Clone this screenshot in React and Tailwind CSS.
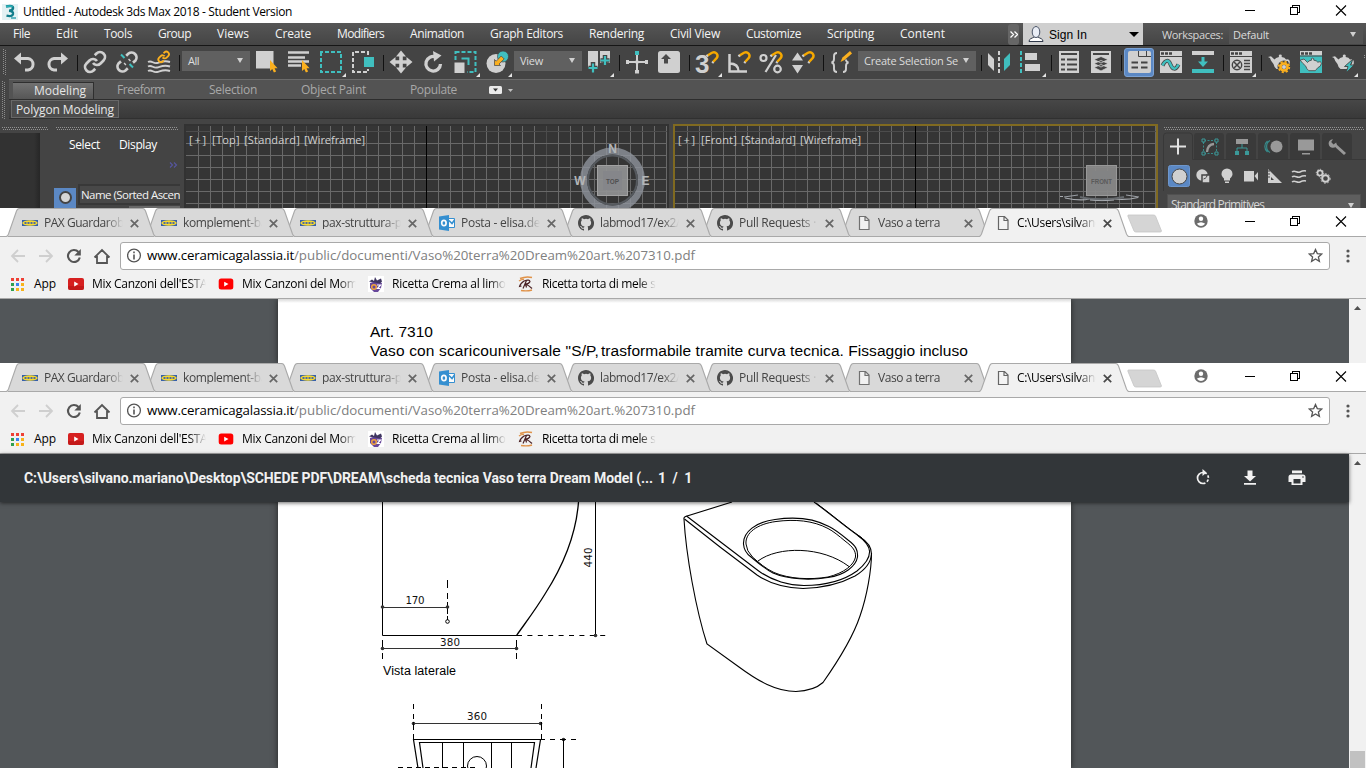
import React, { useLayoutEffect, useRef, useState } from "react";

const L = "#d0d0d0";
const TEAL = "#40bfbf";
const OR = "#fbb01f";
const DK = "#444444";

/* Text set to a given width by adjusting its tracking. */
function Fit({ w, className = "", children }) {
  const ref = useRef(null);
  const [ls, setLs] = useState(0);
  useLayoutEffect(() => {
    const el = ref.current;
    el.style.letterSpacing = "0px";
    const natural = el.getBoundingClientRect().width;
    const value = (w - natural) / el.textContent.length;
    el.style.letterSpacing = value + "px";
    setLs(value);
  }, [w]);
  return (
    <span className={"block shrink-0 whitespace-pre " + className} style={{ width: w }}>
      <span ref={ref} className="inline-block" style={{ letterSpacing: ls }}>
        {children}
      </span>
    </span>
  );
}

function Icon({ x, y = 46, w = 32, h = 33, children, className = "" }) {
  return (
    <svg className={"block shrink-0 " + className} width={w} height={h} viewBox={`${x} ${y} ${w} ${h}`} fill="none">
      {children}
    </svg>
  );
}

const Sep = () => (
  <span className="flex h-[33px] w-1.5 shrink-0 items-center justify-center pt-px pl-0.5">
    <span className="h-4 w-px bg-[#111111]" />
  </span>
);
const Caret = () => <svg className="block shrink-0" width="6" height="5" viewBox="0 0 6 5"><path d="M0 0h6L3 5z" fill={L} /></svg>;
const Corner = ({ x }) => <path d={`M${x} 73v4h-4z`} fill="#e4e4e4" />;
const Cursor = ({ x, y }) => <path d={`M${x} ${y}v11l2.3-2 1.6 3.4 2.2-1-1.5-3.2h3z`} fill={OR} />;
const Magnet = ({ x }) => (
  <g transform={`translate(${x} 0)`}>
    <path d="M-5.5 55.5L-1 52.8a3.6 3.6 0 0 1 4.6 5.4L0 62" stroke="#f5a800" strokeWidth="2.4" />
    <path d="M-6.6 56.2l1.5-1M-.8 63l1.2-1.2" stroke={L} strokeWidth="2.4" />
  </g>
);
const linkA = "M10 13a5 5 0 0 0 7.54.54l3-3a5 5 0 0 0-7.07-7.07l-1.72 1.71";
const linkB = "M14 11a5 5 0 0 0-7.54-.54l-3 3a5 5 0 0 0 7.07 7.07l1.71-1.71";
const Teapot = ({ x, y }) => (
  <g transform={`translate(${x} ${y})`}>
    <path d="M17.500 6.500q4-1.500 3.500 2.500-.5 3-4 4.500" stroke={L} strokeWidth="1.700" />
    <path d="M0 3l3-.8 3.500 3.300Q7.500 3.500 11 3q-.8-2.500 1.300-2.500T13.600 3Q17 3.400 18 5.500 19.500 11 15.500 15H8.500Q6 13 5.500 10 3 7.500 2 4z" fill={L} />
  </g>
);

function Drop({ w, tw, children }) {
  return (
    <span className="mb-1 flex h-5 shrink-0 items-center justify-between bg-[#606060] pr-[7px] pl-1.5" style={{ width: w }}>
      <Fit w={tw} className="text-[11px] text-[#dcdcdc]">{children}</Fit>
      <Caret />
    </span>
  );
}

const WinButtons = () => (
  <svg className="block" width="116" height="23" viewBox="1240 0 116 23" fill="none" stroke="#000000" shapeRendering="crispEdges">
    <path d="M1245 10.500h10" />
    <path d="M1290.500 7.500h7v7h-7zM1292.500 7v-1.500h7v7h-2" />
    <path d="M1336 5.500l10 10M1346 5.500l-10 10" shapeRendering="auto" strokeWidth="1.1" />
  </svg>
);

const MENU = [["File", 17], ["Edit", 22], ["Tools", 28], ["Group", 33], ["Views", 32], ["Create", 36], ["Modifiers", 47], ["Animation", 54], ["Graph Editors", 73], ["Rendering", 55], ["Civil View", 50], ["Customize", 55], ["Scripting", 47], ["Content", 45]];

function MaxHeader() {
  return (
    <>
      <div className="flex h-[23px] items-center justify-between bg-white">
        <div className="flex items-center pl-0.5">
          <svg width="16" height="16" viewBox="0 0 16 16" fill="none">
            <path d="M0 0h16v16H0z" fill="#e3f1f3" />
            <path d="M4 2.500Q11.500 1 11 4.300 10.600 6.800 7 6.800 11.500 7 11 10 10.300 13 4.500 11.700" stroke="#117d8b" strokeWidth="2.400" />
            <path d="M4 2.500Q9 1.500 10.500 3" stroke="#2bb3b8" strokeWidth="1.500" />
            <path d="M9 14h5" stroke="#37a5b1" strokeWidth="1.500" />
          </svg>
          <Fit w={269} className="ml-[5px] text-[12px] text-black">Untitled - Autodesk 3ds Max 2018 - Student Version</Fit>
        </div>
        <div className="pr-[10px]"><WinButtons /></div>
      </div>
      <div className="flex h-[23px] items-center border-b border-[#161616] bg-linear-to-b from-[#565656] to-[#454545]">
        <div className="flex w-[1008px] shrink-0 items-center gap-[26px] pl-[13px]">
          {MENU.map(([t, w]) => <Fit key={t} w={w} className="text-[12px] text-[#f4f4f4]">{t}</Fit>)}
        </div>
        <span className="flex h-[21px] w-[11px] items-center justify-center rounded-[3px] bg-[#666666]">
          <svg width="8" height="7" viewBox="0 0 8 7" fill="none" stroke="#ffffff" strokeWidth="1.300"><path d="M.5.5l3 3-3 3M4.500.5l3 3-3 3" /></svg>
        </span>
        <span className="ml-1 flex h-[22px] w-[120px] items-center bg-[#cfcfcf] pl-[5px]">
          <svg width="16" height="18" viewBox="0 0 16 18" fill="none">
            <path d="M1 16.500c0-3 3-3 5-4.500h4c2 1.500 5 1.500 5 4.500z" fill="#ffffff" stroke="#30394a" />
            <ellipse cx="8" cy="7" rx="3.800" ry="5.500" fill="#e9edf5" stroke="#4b5568" />
          </svg>
          <Fit w={38} className="ml-[5px] pt-px font-['Liberation_Sans',sans-serif] text-[12px] text-black">Sign In</Fit>
          <svg className="ml-[42px]" width="10" height="5" viewBox="0 0 10 5"><path d="M0 0h10L5 5z" fill="#000000" /></svg>
        </span>
        <Fit w={61} className="ml-[19px] pt-px text-[11px] text-[#d6d6d6]">Workspaces:</Fit>
        <span className="ml-[6px] flex h-5 w-[134px] items-center justify-between bg-[#545454] pr-[7px] pl-1">
          <Fit w={36} className="pt-px text-[11px] text-[#dcdcdc]">Default</Fit>
          <Caret />
        </span>
      </div>
    </>
  );
}

function Toolbar() {
  return (
    <div className="flex h-[33px] items-center bg-[#444444]">
      <svg className="shrink-0" width="9" height="33" viewBox="0 46 9 33"><path d="M3.500 49v26M5.500 50v26" stroke="#8c8c8c" strokeDasharray="1 1" /></svg>
      <Icon x={9}><path d="M19 58.500h9a5.800 5.800 0 0 1 0 11.500h-3" stroke={L} strokeWidth="3" /><path d="M14 58.500l7-6v12z" fill={L} /></Icon>
      <Icon x={41}><path d="M63 58.500h-9a5.800 5.800 0 0 0 0 11.500h3" stroke={L} strokeWidth="3" /><path d="M68 58.500l-7-6v12z" fill={L} /></Icon>
      <Sep />
      <Icon x={79}><g transform="translate(83 50)" stroke={L} strokeWidth="2.700"><path d={linkA} /><path d={linkB} /></g></Icon>
      <Icon x={111}>
        <g transform="translate(115 50)" stroke={L} strokeWidth="2.700"><path d="M18 12.600l2.500-2.100a5 5 0 0 0-7-7l-2.300 2.200M15 9.500l-1 1M6 11.400l-2.500 2.100a5 5 0 0 0 7 7l2.300-2.200M9.500 14.500l1-1" /></g>
        <path d="M121 54.500l3.500 3.500M129.500 64l3.500 3.500" stroke={TEAL} strokeWidth="2" />
      </Icon>
      <Icon x={143}>
        <path d="M148 62c4-2 5 2 9 1s7-3 13-1M148 66.500c4-2 5 2 9 1s7-3 13-1M148 71c4-2 5 2 9 1s7-3 13-1" stroke={L} strokeWidth="1.900" />
        <g transform="translate(157.300 50.500) scale(.53)" stroke={OR} strokeWidth="3.400"><path d={linkA} /><path d={linkB} /></g>
      </Icon>
      <Sep /><span className="w-px" />
      <Drop w={68} tw={11}>All</Drop>
      <Icon x={250}><path d="M256 51h17.500v17.500H256z" fill={L} /><Cursor x={270} y={60} /></Icon>
      <Icon x={282}><path d="M288 52.500h21M288 57.500h17M288 61.500h21M288 65.500h13" stroke={L} strokeWidth="2.700" /><Cursor x={302} y={60} /></Icon>
      <span className="w-px" />
      <Icon x={315}><rect x="321" y="52" width="20" height="20" stroke={TEAL} strokeWidth="2" strokeDasharray="4 2" strokeDashoffset="2" /><Corner x={346} /></Icon>
      <Icon x={347}><path d="M368 55v-3h-15v20h15v-3" stroke={L} strokeWidth="2" strokeDasharray="4 2" /><path d="M364 57h10v10h-10z" fill={TEAL} /></Icon>
      <Sep />
      <Icon x={385}><path d="M401 54v16M393 62h16" stroke={L} strokeWidth="3.600" /><path d="M401 50.500l5 6h-10zM401 73.500l5-6h-10zM389.500 62l6-5v10zM412.500 62l-6-5v10z" fill={L} /></Icon>
      <Icon x={417}><path d="M436 57a7.300 7.300 0 1 0 4.500 7" stroke={L} strokeWidth="3.300" /><path d="M433 51l8.500 4.500-7.500 6z" fill={L} /></Icon>
      <Icon x={449}><rect x="455.500" y="52" width="20" height="20" stroke={TEAL} strokeWidth="2" strokeDasharray="4 2" /><path d="M454 60h13v13h-13z" fill={DK} /><path d="M461.500 58.500h7v6.500" stroke={TEAL} strokeWidth="2" /><path d="M454.500 62.500h10v10.500h-10z" fill={L} /><Corner x={480} /></Icon>
      <Icon x={481}><circle cx="496" cy="63.500" r="9.500" fill={L} /><circle cx="503" cy="56.500" r="5.500" fill={TEAL} stroke={DK} strokeWidth=".7" /><path d="M494.500 65.500v-6l1.700 1.700 5-5.200 3 3-5.200 5 1.500 1.500z" fill={OR} stroke={DK} strokeWidth=".7" /><Corner x={512} /></Icon>
      <span className="w-px" />
      <Drop w={68} tw={23}>View</Drop>
      <span className="w-px" />
      <Icon x={583}><path d="M588 51h10v16h-10zM600 51h10v12h-10z" fill={L} /><path d="M593 62v9M588.500 68h9M605 55v11M600.500 60.500h9" stroke={DK} strokeWidth="4.500" /><path d="M593 63.500v9M588.500 68h9M605 56v9M600.500 60.500h9" stroke={TEAL} strokeWidth="2.200" /><Corner x={614} /></Icon>
      <Sep />
      <Icon x={621}><path d="M637 55v18M626 62h22" stroke={L} strokeWidth="2" /><path d="M626 60h3v4h-3zM645 60h3v4h-3zM635 70h4v3.500h-4z" fill={L} /><path d="M635.500 60.500h3v3h-3z" fill={L} /><path d="M635 51h4v4h-4z" fill={TEAL} /></Icon>
      <Icon x={653}><rect x="658" y="51" width="22" height="22" rx="2.500" fill={L} /><path d="M666 54l5 5h-3v4.500h-4V59h-3z" fill="#4a4a4a" /></Icon>
      <Sep />
      <Icon x={691}><text x="695" y="72.500" fontFamily="Liberation Sans, sans-serif" fontWeight="700" fontSize="26" fill={L}>3</text><path d="M706 56l7-5 6 5-1 7h-5z" fill={DK} /><Magnet x={713} /><Corner x={722} /></Icon>
      <Icon x={723}><path d="M729.500 54v17.500H747M729.500 63.500q9 0 9 8" stroke={L} strokeWidth="2.500" /><Magnet x={745} /></Icon>
      <Icon x={755}><circle cx="763.500" cy="58" r="3" stroke={L} strokeWidth="2.200" /><circle cx="777.500" cy="69" r="3.300" stroke={L} strokeWidth="2.200" /><path d="M776 55l-10.500 17" stroke={L} strokeWidth="2.200" /><Magnet x={777} /></Icon>
      <Icon x={787}><path d="M797.500 52.500l5.500 8h-11zM797.500 73.500l5.500-8.500h-11z" fill={L} /><Magnet x={809} /></Icon>
      <Sep />
      <Icon x={825}><path d="M837 53q-3 0-3 3v3q0 3-2.500 3.500 2.500.5 2.500 3.500v3q0 3 3 3" stroke={L} strokeWidth="1.900" /><path d="M843 72q3 0 3-3v-3q0-3 2.500-3.500-2.500-.5-2.500-3" stroke={L} strokeWidth="1.900" /><path d="M840.500 62l2-4.500 7.500-6.500 2 2.500-7.500 6.500z" fill={OR} /></Icon>
      <span className="w-px" />
      <Drop w={118} tw={94}>Create Selection Se</Drop>
      <span className="w-px" />
      <Sep />
      <Icon x={983}><path d="M988 53l6 6v12l-6-6z" fill={L} /><path d="M999 51v22" stroke={L} strokeWidth="2" strokeDasharray="4 2" /><path d="M1010 53l-6 6v12l6-6z" fill={TEAL} /></Icon>
      <Icon x={1015}><path d="M1021 51v22" stroke={TEAL} strokeWidth="2" strokeDasharray="4 2" /><path d="M1025 53h12v7h-12zM1025 64h15v7h-15z" fill={L} /><Corner x={1046} /></Icon>
      <Sep />
      <Icon x={1053}><path d="M1059 51h20v22h-20z" fill={L} /><path d="M1061 54h16" stroke={DK} strokeWidth="2" /><path d="M1061 59.500h4M1061 64.500h4M1061 69.500h4M1067 59.500h10M1067 64.500h10M1067 69.500h10" stroke={DK} strokeWidth="2.200" /></Icon>
      <Icon x={1085}><path d="M1091 51h20v22h-20z" fill={L} /><path d="M1093 54h16" stroke={DK} strokeWidth="2" /><path d="M1094 67.500l7 3.500 7-3.500-7-3zM1094 63.500l7 3.500 7-3.500-7-3zM1094 59.500l7 3.500 7-3.500-7-3z" fill={DK} stroke={L} strokeWidth=".8" /></Icon>
      <Sep />
      <Icon x={1123}><rect x="1124.500" y="48.500" width="29" height="28" rx="2.500" fill="#5b88c4" stroke="#7ba2d4" /><rect x="1128" y="51" width="23" height="22" rx="2" fill={L} /><path d="M1138.500 51v5.500h12.500M1146.500 51v5.500" stroke={DK} /><path d="M1131.500 62.500h6.500M1141 62.500h6.500M1131.500 67.500h6.500M1141 67.500h6.500" stroke={DK} strokeWidth="2.200" /></Icon>
      <Icon x={1155}><path d="M1160 51h22v22h-22z" fill={L} /><path d="M1161 53.500h12" stroke={DK} strokeWidth="2.500" strokeDasharray="3 1" /><path d="M1160 56.500h22" stroke={DK} /><path d="M1162.500 65.500c3-6 6-6 8-1s5 6 8 0" stroke={DK} strokeWidth="4" /><path d="M1162.500 65.500c3-6 6-6 8-1s5 6 8 0" stroke={TEAL} strokeWidth="2.500" /></Icon>
      <Icon x={1187}><path d="M1192 51h22v4h-22z" fill={L} /><path d="M1192 69h22v4h-22zM1201.500 57h3v4.500h3.500l-5 5.500-5-5.500h3.500z" fill={TEAL} /></Icon>
      <Sep />
      <Icon x={1225}><path d="M1230 51h22v22h-22z" fill={L} /><path d="M1231 53.500h12" stroke={DK} strokeWidth="2.500" strokeDasharray="3 1" /><path d="M1230 56.500h22" stroke={DK} /><circle cx="1237" cy="65" r="4.700" stroke={DK} strokeWidth="1.400" /><path d="M1234 62l6 6M1240 62l-6 6" stroke={DK} strokeWidth="1.500" /><path d="M1244 60.500h6M1244 63.500h6M1244 66.500h6M1244 69.500h6" stroke={DK} strokeWidth="1.500" /><Corner x={1256} /></Icon>
      <Sep />
      <Icon x={1263}><Teapot x={1268} y={54} /><circle cx="1284" cy="67" r="6.500" fill={DK} /><circle cx="1284" cy="67" r="5.300" stroke={OR} strokeWidth="1.800" strokeDasharray="2.200 1.950" /><circle cx="1284" cy="67" r="3.500" stroke={OR} strokeWidth="2.600" /><circle cx="1284" cy="67" r="2" fill={L} /></Icon>
      <Icon x={1295}><path d="M1300 51h22v22h-22z" fill={TEAL} /><path d="M1300 51h22v4.500h-22z" fill={L} /><path d="M1301 53.500h12" stroke={DK} strokeWidth="2.500" strokeDasharray="3 1" /><path d="M1300 56h22" stroke={DK} /><g stroke={DK} strokeWidth=".8"><path d="M1300.500 60l3.500-1 3.500 3.500q1-2 4-2.300-.8-2 1-2t1.300 2q3 .3 4 2 3.500-1.300 3.500 1.500-.5 3-3.500 4l-2.500 3h-6.500q-2.500-2-3-4.500-3-2.500-5.800-6.200z" fill={L} /></g></Icon>
      <Icon x={1327}><Teapot x={1332} y={54} /><path d="M1353 59l-8.500 7.500h3.500l-2 6.500 8-8h-3.500z" fill={TEAL} stroke={DK} strokeWidth=".9" /><Corner x={1358} /></Icon>
      <svg className="shrink-0" width="7" height="33" viewBox="0 0 7 33"><path d="M5.500 9v4" stroke="#9a9a9a" strokeDasharray="1 1" /></svg>
    </div>
  );
}

function Ribbon() {
  return (
    <div className="flex h-[45px] bg-[#444444]">
      <svg className="shrink-0" width="9" height="40" viewBox="0 79 9 40"><path d="M2.500 81v37M4.500 82v37" stroke="#8c8c8c" strokeDasharray="1 1" /></svg>
      <div className="h-10 w-[1357px]">
        <div className="flex h-[21px] items-end border-t border-b border-t-[#6b6b6b] border-b-[#2d2d2d] bg-[#535353] text-[12px] text-[#a8a8a8]">
          <span className="ml-1 flex h-[17px] w-[81px] items-center justify-end border-t border-r border-[#2f2f2f] bg-linear-to-b from-[#727272] to-[#565656] pr-[7px]">
            <Fit w={52} className="text-[#e6e6e6]">Modeling</Fit>
          </span>
          <div className="flex h-[18px] items-center pl-[23px]">
            <Fit w={48}>Freeform</Fit>
            <Fit w={48} className="ml-11">Selection</Fit>
            <Fit w={65} className="ml-11">Object Paint</Fit>
            <Fit w={47} className="ml-11">Populate</Fit>
            <svg className="ml-8" width="25" height="9" viewBox="0 0 25 9"><rect width="13" height="8" rx="1.500" fill="#e9e9e9" /><path d="M4 2.500h5L6.500 5.500z" fill="#333333" /><path d="M19 3h5l-2.500 3z" fill="#c0c0c0" /></svg>
          </div>
        </div>
        <div className="flex h-[19px] items-center border-b border-[#303030] bg-linear-to-b from-[#474747] to-[#393939] pl-0.5">
          <span className="flex h-[18px] w-[108px] items-center border border-[#686868] bg-[#4c4c4c] pl-1"><Fit w={98} className="pt-px text-[12px] text-[#e6e6e6]">Polygon Modeling</Fit></span>
        </div>
      </div>
    </div>
  );
}

function Viewport({ x, w, black, label, active, children }) {
  const vs = [];
  for (let v = black - 19 * 12; v < x + w - 2; v += 12) vs.push(v);
  return (
    <div className="relative h-[84px] shrink-0 overflow-hidden bg-[#353535]" style={{ width: w }}>
      <svg className="block" width={w} height="84" viewBox={`${x} 124 ${w} 84`} fill="none" shapeRendering="crispEdges">
        {vs.map((v) => <path key={v} d={`M${v + 0.5} 126v82`} stroke={Math.abs(v - black) === 120 ? "#4c4c4c" : "#696969"} />)}
        {[131, 143, 155, 167, 179, 191, 203].map((y) => <path key={y} d={`M${x + 2} ${y + 0.5}h${w - 4}`} stroke={y === 131 ? "#4c4c4c" : "#696969"} />)}
        <path d={`M${black + 0.5} 126v82`} stroke="#000000" />
        {active ? <path d={`M${x + 1} 208v-83h${w - 2}v83`} stroke="#806a20" strokeWidth="2" /> : <path d={`M${x + 1} 208v-83h${w - 2}v83`} stroke="#323232" strokeWidth="2" />}
        <g shapeRendering="auto">{children}</g>
      </svg>
      <span className="absolute top-[8px] left-[5px] flex gap-[4px] text-[11px] leading-4 text-[#d0d0d0]">
        {label.map(([t, lw]) => <Fit key={t} w={lw}>{t}</Fit>)}
      </span>
    </div>
  );
}

function MaxBody() {
  return (
    <div className="flex h-[84px] bg-[#444444]">
      <div className="h-full w-12 pt-[3px]">
        <div className="h-1.5 pl-0.5"><svg width="46" height="4"><path d="M0 .5h45M1 2.500h45" stroke="#929292" strokeDasharray="1 1" /></svg></div>
        <div className="h-[75px] w-10 bg-linear-to-r from-[#323232] from-85% to-[#272727]" />
      </div>
      <div className="h-full w-[136px] overflow-hidden pt-[3px] pl-1.5">
        <svg className="ml-0.5" width="122" height="4"><path d="M0 .5h121M1 2.500h122" stroke="#929292" strokeDasharray="1 1" /></svg>
        <div className="flex h-[28px] items-center gap-[19px] pl-[15px] text-[12px] text-white"><Fit w={31}>Select</Fit><Fit w={38}>Display</Fit></div>
        <div className="flex h-[9px] w-[124px] items-end justify-end"><svg width="9" height="6" fill="none" stroke="#55559e" strokeWidth="1.200"><path d="M1 .5L3.500 3 1 5.500M5 .5L7.500 3 5 5.500" /></svg></div>
        <div className="flex h-[40px] pt-4">
          <span className="mt-1 flex h-[22px] w-[22px] items-start justify-center bg-[#5b88c4] pt-[3px]"><span className="size-[13px] rounded-full border-2 border-[#454545] bg-[#d6d6d6]" /></span>
          <span className="ml-0.5 h-[36px] w-[102px] overflow-hidden">
            <span className="flex h-[21px] items-center overflow-hidden border-2 border-r-0 border-[#383838] bg-[#484848] pl-px"><Fit w={99} className="text-[11.500px] text-[#f2f2f2]">Name (Sorted Ascen</Fit></span>
            <span className="mt-[1px] ml-[51px] block h-2 w-[51px] bg-[#686868]" />
          </span>
        </div>
      </div>
      <Viewport x={184} w={485} black={426} label={[["[+]", 19], ["[Top]", 28], ["[Standard]", 56], ["[Wireframe]", 61]]}>
        <circle cx="612.500" cy="180" r="29" stroke="#8f949c" strokeOpacity=".8" strokeWidth="7" />
        <circle cx="612.500" cy="180" r="24.500" stroke="#55595e" strokeWidth="2" />
        <path d="M597 165h31v31h-31z" fill="#909192" fillOpacity=".92" /><path d="M603 171h19v19h-19z" fill="#85868a" />
        <path d="M597.500 165.500h30v30h-30z" stroke="#a2a2a2" />
        <g fontFamily="Liberation Sans, sans-serif" fontWeight="700" textAnchor="middle"><text x="612.500" y="183.500" fontSize="8" textLength="13" lengthAdjust="spacingAndGlyphs" fill="#505050">TOP</text><g fontSize="12" fill="#b4b6b8"><text x="612.500" y="152.500">N</text><text x="580" y="185">W</text><text x="645.500" y="185">E</text></g></g>
      </Viewport>
      <div className="w-1" />
      <Viewport x={673} w={485} black={915} label={[["[+]", 19], ["[Front]", 36], ["[Standard]", 55], ["[Wireframe]", 61]]} active>
        <path d="M1086 165h31v31h-31z" fill="#8a8a8a" fillOpacity=".92" /><path d="M1092 171h19v19h-19z" fill="#828384" /><path d="M1086.500 165.500h30v30h-30z" stroke="#989898" />
        <text x="1101.500" y="184" fontSize="8" fontWeight="700" textAnchor="middle" fill="#5a5a5a" fontFamily="Liberation Sans, sans-serif" textLength="21" lengthAdjust="spacingAndGlyphs">FRONT</text>
        <path d="M1064 197l14-2M1126 195l13 2" stroke="#9a9ea4" strokeWidth="1.200" />
        <path d="M1060 196.500h3M1065 198c10 2 20 2 24 1M1114 199c10 1 18 0 24-1.500" stroke="#a7abb0" strokeWidth="1.200" />
        <path d="M1080 197c12 3 30 3 44 0" stroke="#666a6e" strokeWidth="2" /><path d="M1090 200c8 .8 16 .8 24 0" stroke="#a7abb0" />
      </Viewport>
      <div className="h-full w-[208px] overflow-hidden pt-[3px] pl-[5px]">
        <svg className="ml-px" width="200" height="4"><path d="M0 .5h199M1 2.500h199" stroke="#929292" strokeDasharray="1 1" /></svg>
        <svg className="block" width="203" height="60" viewBox="1163 131 203 60" fill="none">
          <path d="M1194 160v-24q0-3 3-3h24q3 0 3 3v24zM1226 160v-24q0-3 3-3h24q3 0 3 3v24zM1258 160v-24q0-3 3-3h24q3 0 3 3v24zM1290 160v-24q0-3 3-3h24q3 0 3 3v24zM1322 160v-24q0-3 3-3h24q3 0 3 3v24z" fill="#3a3a3a" />
          <path d="M1163.500 191v-55q0-3 3-3h23q3 0 3 3v23.500H1366" stroke="#383838" />
          <path d="M1170 146.500h16M1178 138.500v16" stroke="#e2e2e2" strokeWidth="2" />
          <path d="M1204 140.500h12M1204 153.500h12M1203.500 142v10M1216.500 142v10" stroke="#378b8b" strokeDasharray="2 1.500" /><path d="M1202 139h3v3h-3zM1215 139h3v3h-3zM1202 152h3v3h-3zM1215 152h3v3h-3z" fill="#3a3a3a" stroke="#3b9999" /><path d="M1207 152q.5-7.500 7-8" stroke="#9a9a9a" strokeWidth="2.300" />
          <path d="M1236 139h12v5h-12z" fill="#999999" /><path d="M1242 144v4M1237 152v-4h10v4" stroke="#3b9999" /><path d="M1235 151h4v4h-4zM1245 151h4v4h-4z" fill="#3b9999" />
          <circle cx="1276.500" cy="146.500" r="6" fill="#999999" /><path d="M1270 140.500a7 7 0 0 0 0 12M1267.500 141a7 7 0 0 0 0 11" stroke="#378b8b" strokeWidth="1.200" />
          <path d="M1298 139.500h16v11h-16zM1302 153h8v1.500h-8z" fill="#999999" />
          <path d="M1335 145l10 9" stroke="#999999" strokeWidth="3" /><path d="M1333 139.200a4.300 4.300 0 1 0 3 7.300 4 4 0 0 0 .2-4l-2.700 2-2.300-2.400z" fill="#999999" />
          <rect x="1168.500" y="165.500" width="21" height="21" rx="2" fill="#5b88c4" stroke="#6e97cc" /><circle cx="1179.500" cy="176.500" r="7.500" fill={L} stroke="#454545" />
          <circle cx="1202" cy="175" r="5.700" fill={L} /><path d="M1202 175h8v8h-8z" fill={L} stroke={DK} strokeWidth="1.500" /><path d="M1203.500 179q4-1 3.500-5" stroke={DK} />
          <path d="M1224 180.500v-2c-2-2-2.500-3-2.500-4.500a5 5 0 0 1 11 0c0 1.500-.5 2.500-2.500 4.500v2zM1225 181.500h4v1.500h-4z" fill={L} />
          <path d="M1244 171h10v10.500h-10zM1254.500 176l3.500-4v8.500z" fill={L} />
          <path d="M1268 169v14h14z" fill={L} /><path d="M1271 177v3h3z" fill={DK} /><path d="M1268 171h2M1268 174h2M1268 177h2" stroke={DK} />
          <path d="M1292 172c3-2.500 5 1.500 8 0s4-1.500 6-1M1292 177c3-2.500 5 1.500 8 0s4-1.500 6-1M1292 182c3-2.500 5 1.500 8 0s4-1.500 6-1" stroke={L} strokeWidth="1.400" />
          <circle cx="1320" cy="173" r="2.500" stroke={L} strokeWidth="1.600" /><circle cx="1320" cy="173" r="3.700" stroke={L} strokeDasharray="1.400 1.400" /><circle cx="1325.500" cy="178.500" r="3.300" stroke={L} strokeWidth="2" /><circle cx="1325.500" cy="178.500" r="4.700" stroke={L} strokeDasharray="1.800 1.700" />
        </svg>
        <div className="mt-[3px] ml-1 flex h-5 w-[194px] items-center justify-between border border-[#505050] bg-[#5e5e5e] pt-0.5 pr-[6px] pl-[3px]"><Fit w={93} className="text-[12px] text-[#d6d6d6]">Standard Primitives</Fit><Caret /></div>
      </div>
    </div>
  );
}

function Ikea() {
  return <svg width="16" height="16" viewBox="0 0 16 16"><path d="M0 5h16v6H0z" fill="#2454a8" /><ellipse cx="8" cy="8" rx="7.700" ry="2.800" fill="#fcd91c" /><path d="M2.500 7h2v2h-2zM5.500 7h2v2h-2zM8.500 7h2v2h-2zM11.500 7h2v2h-2z" fill="#3e609b" /></svg>;
}
function Outlook() {
  return <svg width="16" height="16" viewBox="0 0 16 16" fill="none"><path d="M9.500 3.500h6v9h-6z" fill="#fff" stroke="#2488d0" /><path d="M10 5.500l3 3L15.500 5" stroke="#2488d0" strokeWidth="1.600" /><path d="M0 1.500L10 0v16L0 14.500z" fill="#2488d0" /><ellipse cx="4.900" cy="8" rx="2.200" ry="2.700" stroke="#fff" strokeWidth="1.700" /></svg>;
}
function GitHub() {
  return <svg width="16" height="16" viewBox="0 0 16 16"><path fill="#3c3c3c" d="M8 0C3.580 0 0 3.580 0 8c0 3.540 2.290 6.530 5.470 7.590.4.07.55-.17.55-.38v-1.490c-2.010.37-2.530-.49-2.690-.94-.09-.23-.48-.94-.82-1.130-.28-.15-.68-.52-.01-.53.63-.01 1.080.58 1.230.82.72 1.210 1.870.87 2.330.66.07-.52.28-.87.51-1.070-1.780-.2-3.640-.89-3.640-3.950 0-.87.31-1.590.82-2.150-.08-.2-.36-1.020.08-2.120 0 0 .67-.21 2.200.82a7.600 7.600 0 0 1 4 0c1.530-1.040 2.200-.82 2.200-.82.44 1.100.16 1.920.08 2.120.51.56.82 1.270.82 2.150 0 3.070-1.870 3.750-3.650 3.950.29.25.54.73.54 1.480v2.200c0 .21.15.46.55.38A8 8 0 0 0 8 0z" /></svg>;
}
function Page() {
  return <svg width="16" height="16" viewBox="0 0 16 16" fill="none" stroke="#666" strokeWidth="1.200"><path d="M3.500 1.500h6l3.500 3.500v9.500H3.500zM9 1.500V5.500h4" fill="#f4f4f4" /></svg>;
}

const TABS = [
  [Ikea, "PAX Guardaroba", 86], [Ikea, "komplement-ba", 84], [Ikea, "pax-struttura-pe", 86], [Outlook, "Posta - elisa.del", 82],
  [GitHub, "labmod17/ex2/", 80], [GitHub, "Pull Requests ·", 77], [Page, "Vaso a terra", 62], [Page, "C:\\Users\\silvano", 85],
];
const Z = ["z-8", "z-7", "z-6", "z-5", "z-4", "z-3", "z-2", "z-10"];

const Bookmark = ({ icon, text, tw, w }) => (
  <span className="flex shrink-0 items-center" style={{ width: w }}>
    {icon}
    <span className="ml-2 w-[114px] overflow-hidden mask-r-from-85% mask-r-to-100%"><Fit w={tw} className="text-[12px] text-black">{text}</Fit></span>
  </span>
);

function Chrome() {
  return (
    <div className="relative z-10 h-[91px] w-full shrink-0 border-b border-[#a8a8a8] bg-[#f1f1f1]">
      <div className="flex h-[29px] border-b border-[#a9a9a9] bg-white pl-1.5">
        {TABS.map(([Fav, title, tw], i) => {
          const on = i === 7;
          return (
            <div key={i} className={"relative flex h-[29px] w-[139px] shrink-0 items-center pt-px pl-4 " + Z[i]}>
              <svg className="absolute top-0 left-0" width="152" height="29" viewBox="0 0 152 29">
                <path d="M0 29C1.500 28.500 2 27 2.500 26L10.500 3Q11.500.5 13.500.5H136.500Q138.500.5 139.500 3L147.500 26C148 27 148.500 28.500 150 29z" fill={on ? "#f1f1f1" : "#d9d9d9"} />
                <path d="M0 28.500C1.500 28.500 2 27 2.500 26L10.500 3Q11.500.5 13.500.5H136.500Q138.500.5 139.500 3L147.500 26C148 27 148.500 28.500 150 28.500" fill="none" stroke="#a9a9a9" strokeWidth="1.100" />
                {!on && <path d="M2 28.500h146" stroke="#a9a9a9" />}
              </svg>
              <span className={"relative flex size-4 shrink-0 " + (on ? "" : "opacity-90")}><Fav /></span>
              <span className="relative ml-1.5 w-[79px] shrink-0 overflow-hidden mask-r-from-78% mask-r-to-100%"><Fit w={tw} className={"text-[12px] " + (on ? "text-black" : "text-[#444444]")}>{title}</Fit></span>
              <svg className="relative ml-[7px] shrink-0" width="9" height="9" viewBox="0 0 9 9"><path d="M.8.8l7.400 7.400M8.200.8L.8 8.200" stroke={on ? "#484848" : "#666666"} strokeWidth="1.700" /></svg>
            </div>
          );
        })}
        <svg className="ml-[9px] shrink-0" width="36" height="28" viewBox="0 0 36 28"><path d="M1.500 7H26.500Q28 7 28.500 8L34.500 23Q34.500 24 33 24H9Q7.500 24 7 23L.8 8Q.8 7 1.500 7z" fill="#d5d5d5" stroke="#c5c5c5" strokeWidth=".8" /></svg>
        <svg className="ml-[31px] shrink-0" width="14" height="28" viewBox="0 0 14 28"><circle cx="7" cy="13" r="6.700" fill="#6c6c6c" /><circle cx="7" cy="10.700" r="2.200" fill="#fff" /><path d="M2.800 15.700q4.200-3 8.400 0-4.200 4.600-8.400 0z" fill="#fff" /></svg>
        <span className="mt-[3px] ml-8 shrink-0"><WinButtons /></span>
      </div>
      <div className="flex h-[36px] items-center pt-px">
        <svg className="shrink-0" width="120" height="34" viewBox="0 238 120 34" fill="none">
          <path d="M25 255H12.500M18 249l-6 6 6 6M39 255h12.500M46 249l6 6-6 6" stroke="#cfcfcf" strokeWidth="1.800" />
          <path d="M78.500 251a6 6 0 1 0 1.300 5.500" stroke="#555" strokeWidth="2.100" /><path d="M80.800 248v6.500h-6.500z" fill="#555" />
          <path d="M94.500 256.500l7.500-7.500 7.500 7.500M97 255v7h10v-7" stroke="#555" strokeWidth="1.800" />
        </svg>
        <div className="flex h-[28px] w-[1210px] shrink-0 items-center rounded-[3px] border border-[#a9a9a9] bg-white pl-1.5">
          <svg className="shrink-0" width="15" height="15" viewBox="0 0 15 15" fill="none"><circle cx="7" cy="7.500" r="6.400" stroke="#555" strokeWidth="1.300" /><path d="M7 3.500v1.700M7 6.500v5" stroke="#555" strokeWidth="1.600" /></svg>
          <Fit w={147} className="ml-[5px] text-[13.300px] text-black">www.ceramicagalassia.it</Fit>
          <Fit w={401} className="text-[13.300px] text-[#808080]">/public/documenti/Vaso%20terra%20Dream%20art.%207310.pdf</Fit>
          <svg className="ml-[613px] shrink-0" width="15" height="15" viewBox="0 0 15 15" fill="none"><path d="M7.500 1.500l1.800 4.100 4.500.4-3.400 2.900 1 4.400-3.900-2.400-3.900 2.400 1-4.400L1.200 6l4.500-.4z" stroke="#555" strokeWidth="1.300" /></svg>
        </div>
        <svg className="ml-4" width="4" height="16" viewBox="0 0 4 16" fill="#555"><circle cx="2" cy="3" r="1.600" /><circle cx="2" cy="8" r="1.600" /><circle cx="2" cy="13" r="1.600" /></svg>
      </div>
      <div className="flex h-[22px] items-center pl-[11px]">
        <svg className="shrink-0" width="13" height="13" viewBox="0 0 13 13"><path d="M0 0h3v3H0zM5 0h3v3H5zM10 0h3v3h-3z" fill="#ee4035" /><path d="M0 5h3v3H0z" fill="#2fa050" /><path d="M5 5h3v3H5z" fill="#3b82f0" /><path d="M10 5h3v3h-3zM5 10h3v3H5zM10 10h3v3h-3z" fill="#f8b31a" /><path d="M0 10h3v3H0z" fill="#2fa050" /></svg>
        <Fit w={22} className="ml-2.5 text-[12px] text-black">App</Fit>
        <span className="ml-3 flex">
          <Bookmark w={150} tw={128} text="Mix Canzoni dell'ESTATE" icon={<svg width="16" height="12" viewBox="0 0 16 12"><rect width="16" height="12" rx="2" fill="#d62020" /><path d="M0 8h16v2q0 2-2 2H2q-2 0-2-2z" fill="#b81616" opacity=".6" /><path d="M6.200 3.500v5l4.300-2.500z" fill="#fff" /></svg>} />
          <Bookmark w={150} tw={122} text="Mix Canzoni del Mome" icon={<svg width="16" height="12" viewBox="0 0 16 12"><rect x=".7" y=".5" width="14.600" height="11" rx="2.500" fill="#ff0000" /><path d="M6.200 3.700v4.800l4.300-2.400z" fill="#fff" /></svg>} />
          <Bookmark w={150} tw={121} text="Ricetta Crema al limon" icon={<svg width="16" height="16" viewBox="0 0 16 16" fill="none"><path d="M0 0h16v16H0z" fill="#fff" /><path d="M2 7Q8 4 14 7l-1 5-3 4H6l-4-4z" fill="#67479a" /><path d="M1 5.500l3-2 2 1.500 1-4 2 3.500 4-2 1 3-2 2z" fill="#3f3560" /><circle cx="6" cy="11" r="2.300" stroke="#f0a33c" strokeWidth="1.500" /><path d="M9 9h3.500l-3 3.500h3" stroke="#fff" strokeWidth="1.200" /></svg>} />
          <Bookmark w={150} tw={120} text="Ricetta torta di mele se" icon={<svg width="16" height="16" viewBox="0 0 16 16" fill="none"><path d="M2 2.500Q8 0 14 1.500M1 5q3-2 5-1.500M3 14.500q6 1 11-.5" stroke="#e09248" strokeWidth="1.400" /><path d="M6 5q-4 3-4.500 5.500l2-.5M6 5q5.500-2 6 .5-1 2.500-4.500 2.500 3.500 1.500 6.500 4.500M8.500 4.500L5 12.500M7.500 8l1 3.500" stroke="#4b2326" strokeWidth="1.200" /></svg>} />
        </span>
      </div>
    </div>
  );
}

const Scroll = ({ thumb }) => (
  <div className="flex h-full w-[17px] shrink-0 flex-col items-center justify-between bg-[#f1f1f1] pt-[7px]">
    <svg width="7" height="4" viewBox="0 0 7 4"><path d="M0 4h7L3.500 0z" fill="#505050" /></svg>
    {thumb && <div className="h-[17px] w-[15px] bg-[#c1c1c1]" />}
  </div>
);

function Drawing() {
  return (
    <svg className="block" width="793" height="266" viewBox="278 502 793 266" fill="none" stroke="#000000" strokeWidth="1">
      <path d="M382.500 502v133.500H517" />
      <path d="M578.500 502C576 535 563 566 545 594 536 609 526 622 516.500 635.500" strokeWidth="1.300" />
      <path d="M595.500 502v133.500" />
      <path d="M517 635.500h90" strokeDasharray="5 5.400" />
      <path d="M383 607.500h64M382.500 648.500h134" stroke="#333333" />
      <path d="M447.500 580v8M447.500 593v6M447.500 602v12M447.500 616v4M382.500 640v7M382.500 653v6M516.500 640v7M516.500 653v6" />
      <circle cx="447.500" cy="621.500" r="1.800" />
      <g fill="#333333" stroke="none">{[[382.5, 607], [447.5, 607], [382.5, 648.5], [516.5, 648.5], [595.5, 635.5], [413.5, 723.5], [540.5, 723.5], [563.5, 739.5]].map(([x, y], i) => <circle key={i} cx={x} cy={y} r="1.800" />)}</g>
      <path d="M413.500 704v5M413.500 714v5M413.500 722v8M413.500 734v5M541.500 704v5M541.500 714v5M541.500 722v8M541.500 734v5" />
      <path d="M413.500 723.500h127" stroke="#333333" />
      <path d="M418 768l-4.500-28.500h127L536 768M423 768l-3.500-25.500h115L531 768" strokeWidth="1.200" />
      <path d="M442.500 743v25M463.500 743v25M491.500 743v25M511.500 743v25M563.500 739v29" />
      <path d="M541 739.500h4M550 739.500h5M560 739.500h6M571 739.500h5" />
      <circle cx="477" cy="766" r="9.500" />
      <path d="M398 767.500h80" strokeDasharray="5 4" />
      <g fill="#111111" stroke="none" fontFamily="DejaVu Sans, sans-serif" fontSize="10.300">
        <text x="405.500" y="604" textLength="19">170</text><text x="440" y="645.500" textLength="20">380</text><text x="467" y="720" textLength="20">360</text>
        <text transform="translate(592.300 567.500) rotate(-90)" textLength="20">440</text>
      </g>
      <text x="383" y="674.500" fill="#000000" stroke="none" fontFamily="Liberation Sans, sans-serif" fontSize="12.500" textLength="73">Vista laterale</text>
      <path d="M732 502L685.500 516.500Q683.500 517.500 684 519C686 555 696 610 707 644L739 667C758 681 776 691.500 796 691.500 808 691 818 687 823 682.500C836 664 852 640 860 616 867 596 871.500 570 871.500 553" strokeWidth="1.100" />
      <path d="M814 502C828 512 844 526 860 537 868 542 871.500 548 871.500 554 871 562 865 570 855 576 838 585 822 588 803 588.500 788 588 770 584 757 575L720 547 684.500 519" strokeWidth="1.100" />
      <path d="M686.500 516L758 570.500C772 581 790 585.500 804 585.500 823 585.500 843 581 857 571 867 563 870 557 869.500 551 869 545 864 540 858 535.500" strokeWidth="1.100" />
      <path d="M816 503C830 513 846 527 862 538" />
      <path d="M743.500 544C743 532 756 522 775 519.500 795 516.500 814 518.500 829 526.500 834 529 842 535 848 540 856 546 858 550 857.500 557 856 566 845 575 828 577.500 810 580.500 788 579.500 773 573 765 569 757 562 751 557Q744 552 743.500 544z" strokeWidth="1.100" />
      <path d="M746 544C745 533 757 524 776 521.500 795 519 813 520.500 828 528.500 833 531 839 536 845 541 853 547 856 551 855.500 557 854 565 844 573 828 577 810 580 789 579 774 572.500 766 569 758 562 752.500 557Q746.500 551 746 544z" />
      <path d="M758 561C778 546 822 546 849 566.500" />
    </svg>
  );
}

export default function App() {
  return (
    <div className="flex h-[768px] w-[1366px] flex-col overflow-hidden bg-[#525659] font-['Open_Sans','Noto_Sans',sans-serif] leading-none">
      <div className="h-[208px] shrink-0">
        <MaxHeader /><Toolbar /><Ribbon /><MaxBody />
      </div>
      <Chrome />
      <div className="flex h-16 shrink-0">
        <div className="flex flex-1 justify-center bg-[#525659]">
          <div className="w-[793px] bg-white bg-linear-to-b from-[#d9d9d9] to-white to-[4px] pt-[23px] pl-[92px] font-['Liberation_Sans',sans-serif] text-[15.500px] leading-[19px] text-black shadow-[0_0_6px_#222]">
            <Fit w={63}>Art. 7310</Fit>
            <div className="flex"><Fit w={229}>Vaso con scaricouniversale "S/P,</Fit><Fit w={367} className="ml-0.5">trasformabile tramite curva tecnica. Fissaggio incluso</Fit></div>
          </div>
        </div>
        <Scroll />
      </div>
      <Chrome />
      <div className="flex min-h-0 flex-1">
        <div className="flex flex-1 flex-col">
          <div className="relative z-10 flex h-12 shrink-0 items-center bg-[#323639] pl-6 font-['Roboto',sans-serif] text-[14px] font-bold text-[#f1f1f1] shadow-[0_1px_4px_rgba(0,0,0,0.6)]">
            <Fit w={629}>C:\Users\silvano.mariano\Desktop\SCHEDE PDF\DREAM\scheda tecnica Vaso terra Dream Model (...</Fit>
            <Fit w={34} className="ml-[5px]">1  /  1</Fit>
            <svg className="ml-[502px]" width="112" height="20" viewBox="1194 468 112 20" fill="none">
              <path d="M1203 472.500a5.500 5.500 0 0 0 0 11" stroke="#f1f1f1" strokeWidth="1.700" /><path d="M1203 483.500a5.500 5.500 0 0 0 2-10.600" stroke="#f1f1f1" strokeWidth="1.700" strokeDasharray="2.500 1.800" /><path d="M1202.500 469v7l4-3.500z" fill="#f1f1f1" />
              <path d="M1247.500 470.500h5v5.500h3.500l-6 5.500-6-5.500h3.500zM1244 483h12v1.700h-12z" fill="#f1f1f1" />
              <path d="M1292 470.500h10v2.800h-10zM1291 474.500h12q2.500 0 2.500 2.500v5h-3v3h-11v-3h-3v-5q0-2.500 2.500-2.500z" fill="#f1f1f1" /><path d="M1293.500 479h7v4.500h-7z" fill="#323639" /><circle cx="1303" cy="477" r=".8" fill="#323639" />
            </svg>
          </div>
          <div className="flex flex-1 justify-center bg-[#525659]"><div className="w-[793px] bg-white shadow-[0_0_6px_#222]"><Drawing /></div></div>
        </div>
        <Scroll thumb />
      </div>
    </div>
  );
}
